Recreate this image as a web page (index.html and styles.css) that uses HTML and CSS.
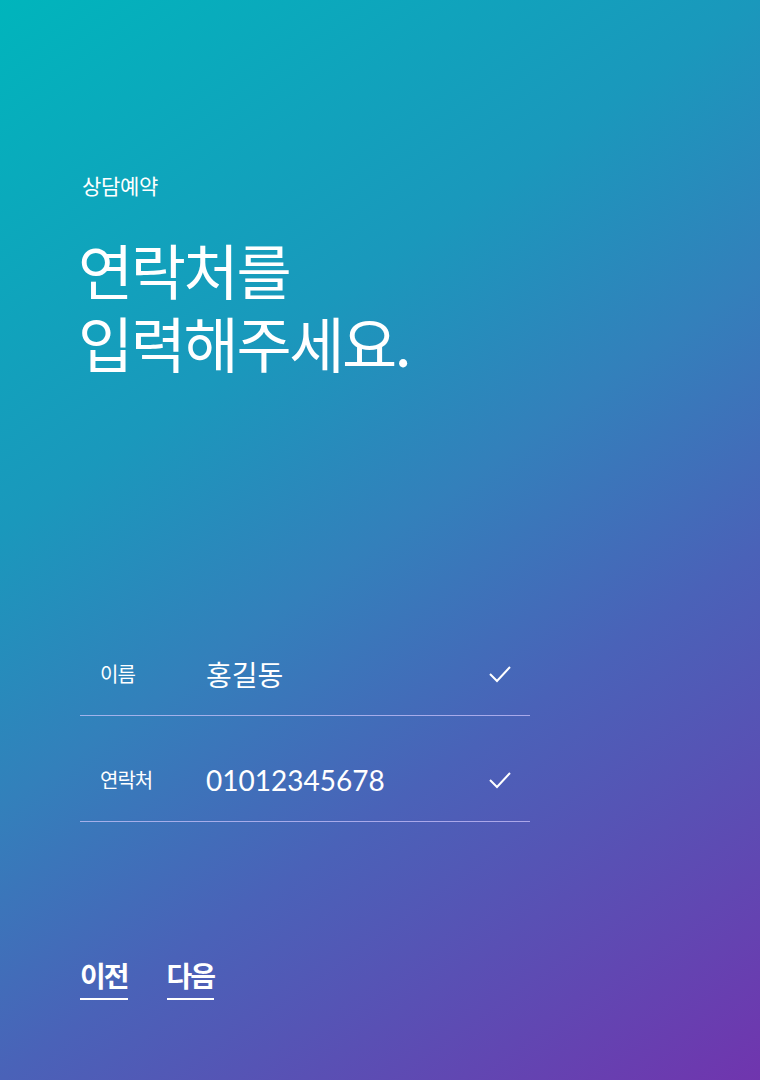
FILE: index.html
```html
<!DOCTYPE html>
<html lang="ko">
<head>
<meta charset="utf-8">
<link rel="stylesheet" href="styles.css">
</head>
<body>
<main class="page">
  <header class="intro">
    <p class="eyebrow">상담예약</p>
    <h1 class="title"><span class="line">연락처를</span><span class="line">입력해주세요.</span></h1>
  </header>
  <section class="form">
    <div class="row">
      <span class="label">이름</span>
      <span class="value">홍길동</span>
      <svg class="check" width="24" height="18" viewBox="0 0 24 18"><path d="M2 9 L9 16 L22 2" fill="none" stroke="#fff" stroke-width="2"/></svg>
    </div>
    <div class="row">
      <span class="label">연락처</span>
      <span class="value">01012345678</span>
      <svg class="check" width="24" height="18" viewBox="0 0 24 18"><path d="M2 9 L9 16 L22 2" fill="none" stroke="#fff" stroke-width="2"/></svg>
    </div>
  </section>
  <nav class="actions">
    <a class="btn">이전</a>
    <a class="btn">다음</a>
  </nav>
</main>
</body>
</html>
```
FILE: styles.css
```css
html, body {
  margin: 0;
  padding: 0;
}
body {
  width: 760px;
  height: 1080px;
  overflow: hidden;
  font-family: "Lato", "Noto Sans CJK KR", sans-serif;
  color: #fff;
}
.page {
  box-sizing: border-box;
  width: 760px;
  height: 1080px;
  background: linear-gradient(145deg, #00b5bc 0%, #1a98bc 33%, #3380bb 50%, #4a62b8 67%, #7035ae 100%);
  padding: 0 80px;
  display: flex;
  flex-direction: column;
}
.intro {
  padding-top: 170px;
}
.eyebrow {
  margin: 0 0 0 2px;
  font-size: 21px;
  line-height: 32px;
  letter-spacing: -0.3px;
}
.title {
  margin: 30px 0 0 -2px;
  font-family: "Noto Sans CJK KR", sans-serif;
  font-weight: 400;
  font-size: 60px;
  line-height: 73px;
  letter-spacing: -2.4px;
}
.line {
  display: block;
}
.form {
  margin-top: 232px;
  width: 450px;
}
.row {
  display: flex;
  align-items: center;
  box-sizing: border-box;
  height: 106px;
  border-bottom: 1px solid rgba(210, 200, 255, 0.7);
  padding: 22px 18px 0 20px;
}
.label {
  width: 106px;
  font-size: 20px;
  letter-spacing: -1px;
}
.value {
  flex: 1;
  font-size: 28px;
}
.check {
  display: block;
}
.actions {
  margin-top: 136px;
  display: flex;
  gap: 39px;
}
.btn {
  font-size: 28px;
  font-weight: 700;
  line-height: 36px;
  padding-bottom: 4px;
  border-bottom: 2px solid #fff;
  letter-spacing: -2px;
}
```
